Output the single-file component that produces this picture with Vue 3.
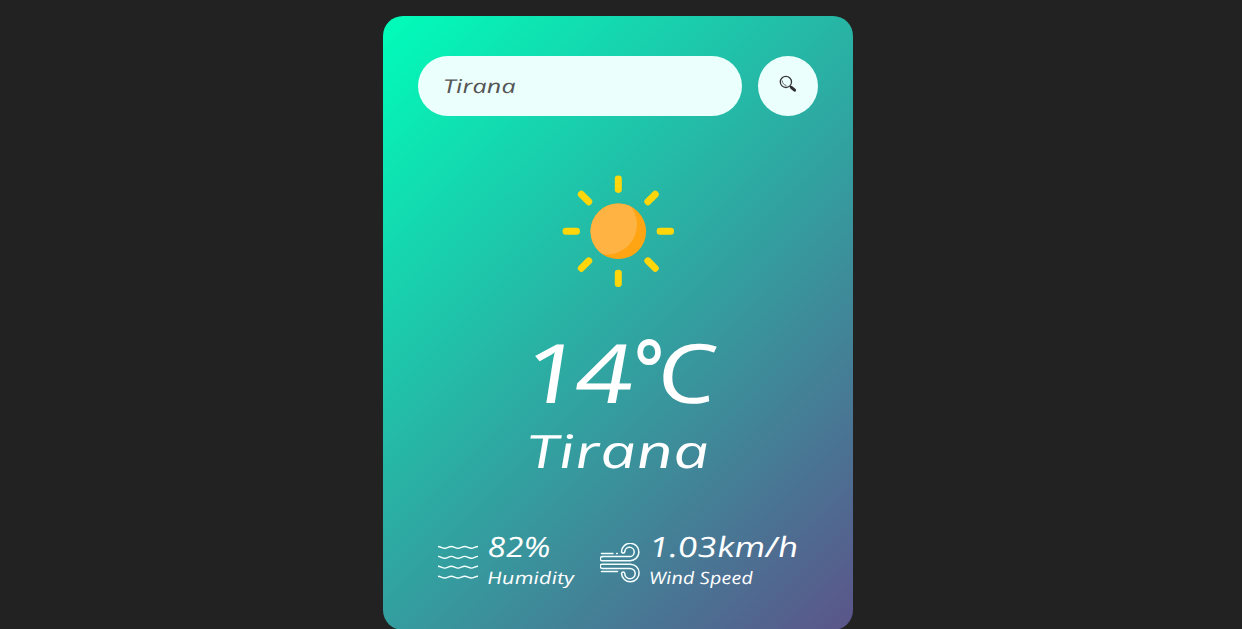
<script setup>
import { ref } from 'vue'
const query = ref('Tirana')
const rays = [0, 45, 90, 135, 180, 225, 270, 315]
const waves = [4.4, 14.3, 24.2, 34.1]
</script>

<template>
  <main class="card">
    <form class="search" @submit.prevent>
      <label class="field"><input v-model="query" aria-label="City" spellcheck="false" /></label>
      <button type="submit" aria-label="Search">
        <svg width="18" height="18" viewBox="0 0 18 18" fill="none">
          <circle cx="6.9" cy="6.9" r="5.6" stroke="#36363b" stroke-width="1.3" />
          <path d="M3.2 5.5c0 2.3 1.6 4.6 4.2 4.9" stroke="#55555a" stroke-width=".9" />
          <path d="M10.8 10.9l1.5 1.4" stroke="#36363b" stroke-width="1.4" />
          <path d="M12.3 12.3l3.3 2.9" stroke="#302d32" stroke-width="3" stroke-linecap="round" />
        </svg>
      </button>
    </form>

    <section class="weather">
      <svg class="sun" width="112" height="112" viewBox="0 0 112 112">
        <defs><clipPath id="disc"><circle cx="56.3" cy="56.3" r="27.8" /></clipPath></defs>
        <rect v-for="r in rays" :key="r" x="52.8" y=".6" width="7" height="17.3" rx="3.3" fill="#ffd60a" :transform="`rotate(${r} 56.3 56.3)`" />
        <circle cx="56.3" cy="56.3" r="27.8" fill="#ffa412" />
        <circle cx="45" cy="49.5" r="30" fill="#ffb342" clip-path="url(#disc)" />
      </svg>
      <h1 class="temp"><span class="t one">1</span><span class="t four">4</span><span class="t deg">°</span><span class="t unit">C</span></h1>
      <h2 class="city"><span class="t">Tirana</span></h2>
    </section>

    <section class="details">
      <div class="col humidity">
        <svg width="40" height="40" viewBox="0 0 40 40" fill="none" stroke="#f4ffff" stroke-width="1.4">
          <path v-for="y in waves" :key="y" :d="`M0 ${y - .9}c2.5 0 4.1 1.8 6.7 1.8s4.1-1.8 6.6-1.8 4.1 1.8 6.7 1.8 4.1-1.8 6.7-1.8 4.1 1.8 6.6 1.8 4.2-1.8 6.7-1.8`" />
        </svg>
        <div class="info">
          <p class="value"><span class="t">82%</span></p>
          <p class="label"><span class="t">Humidity</span></p>
        </div>
      </div>
      <div class="col wind">
        <svg width="40" height="40" viewBox="0 0 40 40" fill="none" stroke="#f4ffff" stroke-width="1.5" stroke-linecap="round">
          <path d="M1.5 10.5h11.5M16.6 10.5h.7M1.5 28.4h16" />
          <path d="M2.2 13.6H29.5a4.7 4.7 0 1 0-4.7-4.9 1.7 1.7 0 0 1-3.3 0 8.7 8.7 0 1 1 8.3 9H2.2a2 2 0 0 1 0-4z" />
          <path d="M2.2 21.2H30a8.8 8.8 0 1 1-8.5 9.2 1.7 1.7 0 0 1 3.3 0 5.2 5.2 0 1 0 5-5H2.2a2.1 2.1 0 0 1 0-4.2z" />
        </svg>
        <div class="info">
          <p class="value"><span class="t">1.03km/h</span></p>
          <p class="label"><span class="t">Wind Speed</span></p>
        </div>
      </div>
    </section>
  </main>
</template>

<style>
html, body { margin: 0; height: 100%; background: #222; overflow: hidden; }
</style>

<style scoped>
* { box-sizing: border-box; margin: 0; padding: 0; }
.card { width: 470px; height: 614px; margin: 16px 0 0 383px; padding: 40px 35px; border-radius: 20px; background: linear-gradient(135deg, #00feba, #5b548a); color: #fff; font-family: "Open Sans", "Noto Sans", sans-serif; font-style: italic; }
.search { display: flex; justify-content: space-between; height: 60px; }
.field { display: block; width: 324px; height: 60px; padding-left: 25px; border-radius: 30px; background: #ebfffc; }
input { width: 220px; height: 59px; border: 0; outline: 0; background: transparent; color: #555; font: italic 400 19px "Open Sans", sans-serif; transform: scaleX(1.34) skewX(3deg); transform-origin: left; }
button { display: flex; align-items: flex-start; width: 60px; height: 60px; padding: 19px 0 0 21px; border: 0; border-radius: 50%; background: #ebfffc; }
button svg { display: block; }
.weather { display: flex; flex-direction: column; align-items: flex-start; padding-top: 59px; }
.sun { display: block; margin-left: 144px; }
.t { display: inline-block; white-space: pre; transform-origin: left; }
.temp { display: flex; width: 200px; height: 96px; margin: 36px 0 0 104px; font-size: 82px; line-height: 96px; font-weight: 500; }
.one { width: 52px; transform: scaleX(1.24) skewX(5deg); }
.four { width: 60px; transform: scaleX(1.28) skewX(4deg); }
.deg { width: 21px; height: 48px; margin-top: -5px; line-height: 96px; font-weight: 600; transform: scaleX(.86); }
.unit { font-weight: 500; transform: scaleX(1.24) skewX(5deg); }
.city { height: 60px; margin: 1px 0 0 108px; font-size: 46px; line-height: 60px; font-weight: 500; }
.city .t { transform: scaleX(1.39) skewX(5deg); }
.details { display: flex; margin-top: 49px; padding-left: 20px; }
.col { display: flex; }
.humidity { width: 162px; }
.col > svg { flex: none; margin-top: 14px; }
.info { margin-left: 9px; }
.value { height: 34px; font-size: 28px; line-height: 34px; font-weight: 500; }
.label { height: 30px; font-size: 17px; line-height: 30px; font-weight: 500; }
.value .t { transform: scaleX(1.19) skewX(4deg); }
.label .t { transform: scaleX(1.28) skewX(4deg); }
.wind .value .t { transform: scaleX(1.27) skewX(4deg); }
.wind .label .t { transform: scaleX(1.18) skewX(4deg); }
</style>
